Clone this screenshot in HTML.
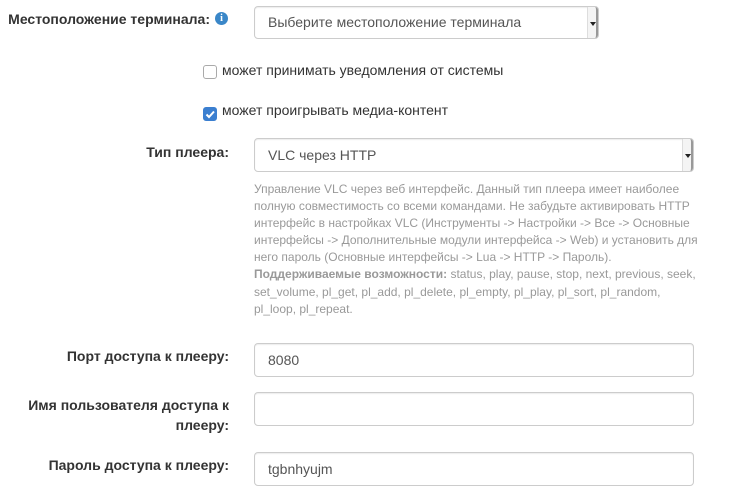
<!DOCTYPE html>
<html><head><meta charset="utf-8"><style>
body{margin:0;width:734px;height:499px;background:#fff;font-family:"Liberation Sans","DejaVu Sans",sans-serif;position:relative;overflow:hidden}
.a{position:absolute}
.lbl{position:absolute;font-weight:bold;font-size:14px;color:#333;text-align:right;line-height:20px}
.box{position:absolute;border:1px solid #ccc;border-radius:4px;box-sizing:border-box;background:#fff;font-size:14px;color:#555;padding-left:13px;box-shadow:inset 0 1px 1px rgba(0,0,0,.075)}
.sel .arr{position:absolute;right:0;top:0;bottom:0;width:8px;background:#f4f4f4;border-left:1px solid #ddd;border-right:2px solid #999;border-radius:0 3px 3px 0}
.sel .arr:after{content:"";position:absolute;left:2px;top:50%;margin-top:-1px;border-left:3px solid transparent;border-right:3px solid transparent;border-top:4px solid #222}
.help{position:absolute;left:254px;top:181px;width:450px;font-size:12px;line-height:17.1px;color:#999}
.cb{position:absolute;width:14px;height:14px;border:1px solid #aaa;border-radius:3px;box-sizing:border-box;background:#fff}
.ct{position:absolute;font-size:14px;color:#333}
</style></head><body>
<div class="lbl" style="left:0;width:210px;top:9px">Местоположение терминала:</div>
<div class="a" style="left:215px;top:12px;width:13px;height:13px;border-radius:50%;background:#3a87c8;color:#fff;font:bold 10px/13px 'Liberation Serif',serif;text-align:center">i</div>
<div class="box sel" style="left:254px;top:6px;width:345px;height:33px;line-height:31px">Выберите местоположение терминала<div class="arr"></div></div>

<div class="cb" style="left:203px;top:65px"></div>
<div class="ct" style="left:222px;top:62px">может принимать уведомления от системы</div>
<div class="cb" style="left:203px;top:107px;background:#3b7fd0;border-color:#3b7fd0">
<svg width="12" height="12" viewBox="0 0 12 12" style="position:absolute;left:0;top:0"><path d="M2.5 6.5 L5 9 L10 3.5" stroke="#fff" stroke-width="2" fill="none"/></svg></div>
<div class="ct" style="left:222px;top:102px">может проигрывать медиа-контент</div>

<div class="lbl" style="left:0;width:229px;top:142px">Тип плеера:</div>
<div class="box sel" style="left:254px;top:138px;width:440px;height:34px;line-height:32px">VLC через HTTP<div class="arr"></div></div>
<div class="help">Управление VLC через веб интерфейс. Данный тип плеера имеет наиболее полную совместимость со всеми командами. Не забудьте активировать HTTP интерфейс в настройках VLC (Инструменты -&gt; Настройки -&gt; Все -&gt; Основные интерфейсы -&gt; Дополнительные модули интерфейса -&gt; Web) и установить для него пароль (Основные интерфейсы -&gt; Lua -&gt; HTTP -&gt; Пароль).<br><b>Поддерживаемые возможности:</b> status, play, pause, stop, next, previous, seek, set_volume, pl_get, pl_add, pl_delete, pl_empty, pl_play, pl_sort, pl_random, pl_loop, pl_repeat.</div>

<div class="lbl" style="left:0;width:229px;top:346px">Порт доступа к плееру:</div>
<div class="box" style="left:254px;top:343px;width:440px;height:34px;line-height:32px">8080</div>
<div class="lbl" style="left:0;width:229px;top:395px">Имя пользователя доступа к<br>плееру:</div>
<div class="box" style="left:254px;top:392px;width:440px;height:34px"></div>
<div class="lbl" style="left:0;width:229px;top:455px">Пароль доступа к плееру:</div>
<div class="box" style="left:254px;top:452px;width:440px;height:34px;line-height:32px">tgbnhyujm</div>
</body></html>
